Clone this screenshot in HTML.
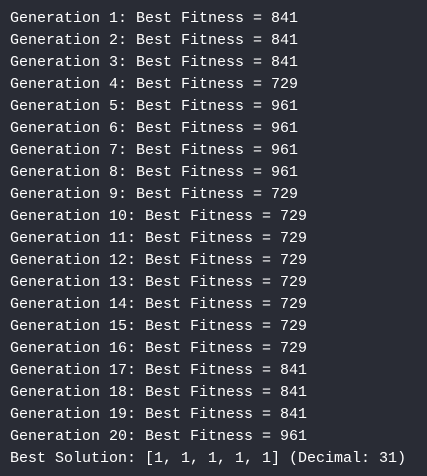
<!DOCTYPE html>
<html><head><style>
html,body{margin:0;padding:0;background:#292c35;width:427px;height:476px;overflow:hidden}
pre{margin:0;padding:8px 0 0 10px;font-family:"Liberation Mono",monospace;font-size:15px;line-height:22px;color:#ffffff}
</style></head><body><pre>Generation 1: Best Fitness = 841
Generation 2: Best Fitness = 841
Generation 3: Best Fitness = 841
Generation 4: Best Fitness = 729
Generation 5: Best Fitness = 961
Generation 6: Best Fitness = 961
Generation 7: Best Fitness = 961
Generation 8: Best Fitness = 961
Generation 9: Best Fitness = 729
Generation 10: Best Fitness = 729
Generation 11: Best Fitness = 729
Generation 12: Best Fitness = 729
Generation 13: Best Fitness = 729
Generation 14: Best Fitness = 729
Generation 15: Best Fitness = 729
Generation 16: Best Fitness = 729
Generation 17: Best Fitness = 841
Generation 18: Best Fitness = 841
Generation 19: Best Fitness = 841
Generation 20: Best Fitness = 961
Best Solution: [1, 1, 1, 1, 1] (Decimal: 31)</pre></body></html>
